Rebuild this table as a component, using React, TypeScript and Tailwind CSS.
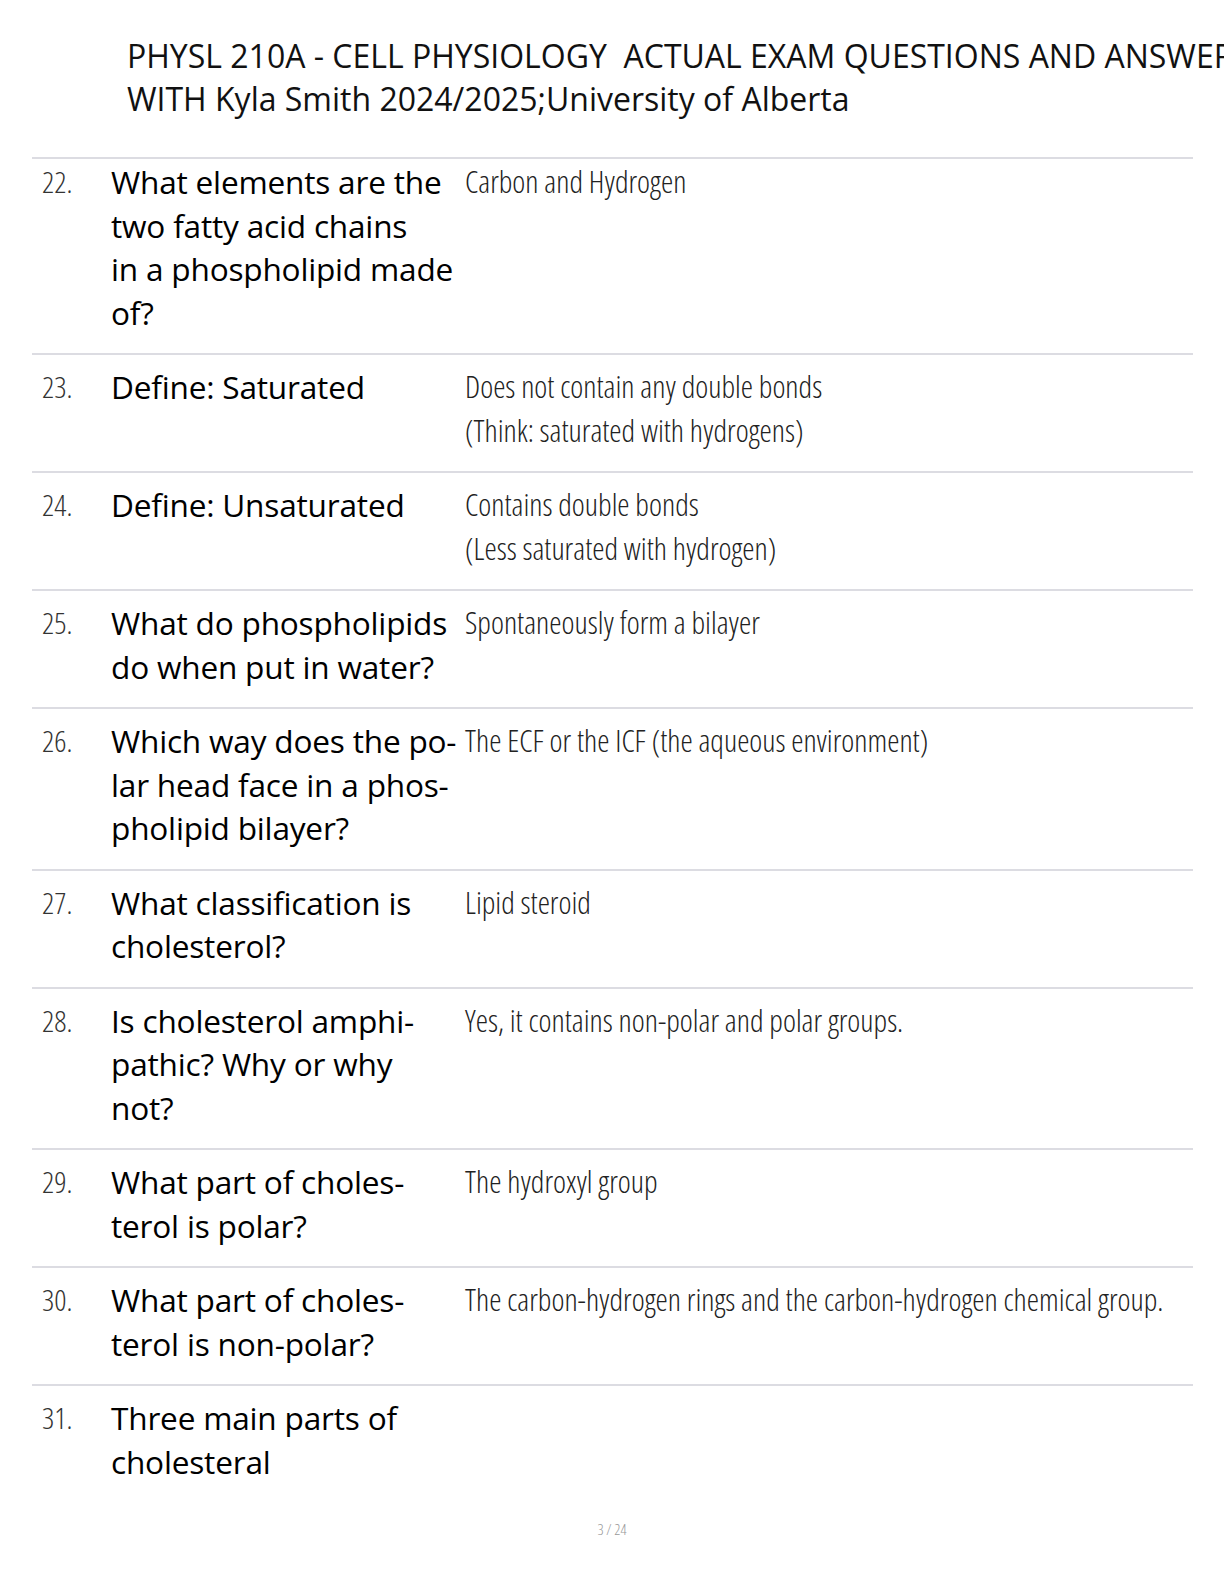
import React from 'react';

type Item = { n: number; q: string[]; a: string[] };

const items: Item[] = [
  { n: 22, q: ['What elements are the', 'two fatty acid chains', 'in a phospholipid made', 'of?'], a: ['Carbon and Hydrogen'] },
  { n: 23, q: ['Define: Saturated'], a: ['Does not contain any double bonds', '(Think: saturated with hydrogens)'] },
  { n: 24, q: ['Define: Unsaturated'], a: ['Contains double bonds', '(Less saturated with hydrogen)'] },
  { n: 25, q: ['What do phospholipids', 'do when put in water?'], a: ['Spontaneously form a bilayer'] },
  { n: 26, q: ['Which way does the po-', 'lar head face in a phos-', 'pholipid bilayer?'], a: ['The ECF or the ICF (the aqueous environment)'] },
  { n: 27, q: ['What classification is', 'cholesterol?'], a: ['Lipid steroid'] },
  { n: 28, q: ['Is cholesterol amphi-', 'pathic? Why or why', 'not?'], a: ['Yes, it contains non-polar and polar groups.'] },
  { n: 29, q: ['What part of choles-', 'terol is polar?'], a: ['The hydroxyl group'] },
  { n: 30, q: ['What part of choles-', 'terol is non-polar?'], a: ['The carbon-hydrogen rings and the carbon-hydrogen chemical group.'] },
  { n: 31, q: ['Three main parts of', 'cholesteral'], a: [] },
];

const thin = "font-['Open_Sans',sans-serif] font-light font-stretch-condensed";

const Row = ({ item, first }: { item: Item; first: boolean }) => (
  <div className={`grid grid-cols-[79px_354px_1fr] border-t-2 border-[#dcdce2] ${first ? 'pt-[1px]' : 'pt-[10px]'} pb-[19px]`}>
    <div className={`${thin} pl-[10px] text-[30px] leading-[43.5px] text-[#333]`}>{item.n}.</div>
    <div className="text-[31.6px] leading-[43.5px] tracking-[-0.2px] text-black whitespace-nowrap">
      {item.q.map((l) => (
        <div key={l}>{l}</div>
      ))}
    </div>
    <div className={`${thin} text-[31px] leading-[43.5px] text-[#222] whitespace-nowrap`}>
      {item.a.map((l) => (
        <div key={l}>{l}</div>
      ))}
    </div>
  </div>
);

export default function App() {
  return (
    <div className="w-[1224px] h-[1584px] bg-white overflow-hidden font-['Open_Sans',sans-serif] relative">
      <div className="pl-[127px] pt-[35px] pb-[37px] text-[32px] leading-[42.5px] text-[#111] whitespace-nowrap">
        <div>PHYSL 210A - CELL PHYSIOLOGY&nbsp; ACTUAL EXAM QUESTIONS AND ANSWERS</div>
        <div>WITH Kyla Smith 2024/2025;University of Alberta</div>
      </div>
      <div className="ml-[32px] w-[1161px]">
        {items.map((it, i) => (
          <Row key={it.n} item={it} first={i === 0} />
        ))}
      </div>
      <div className={`absolute left-0 right-0 top-[1518px] text-center text-[15px] text-[#999] ${thin}`}>3 / 24</div>
    </div>
  );
}
